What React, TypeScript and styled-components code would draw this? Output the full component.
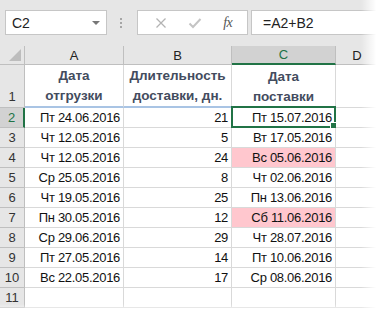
import React from "react";
import styled, { createGlobalStyle } from "styled-components";

const GlobalStyle = createGlobalStyle`
  html, body { margin: 0; padding: 0; background: #fff; }
  * { box-sizing: border-box; }
`;

const FONT = `"Liberation Sans", Arial, sans-serif`;
const GREEN = "#217346";
const GRID = "#d9d9d9";
const HEAD_BG = "#e6e6e6";
const HEAD_LINE = "#bfbfbf";

const Frame = styled.div`
  position: relative;
  width: 379px;
  height: 316px;
  overflow: hidden;
  background: #fff;
  font-family: ${FONT};
`;

const Toolbar = styled.div`
  height: 46px;
  background: ${HEAD_BG};
  display: flex;
  align-items: flex-start;
  padding: 10px 0 0 5px;
`;

const NameBox = styled.div`
  width: 102px;
  height: 25px;
  background: #fff;
  border: 1px solid #c6c6c6;
  display: flex;
  align-items: center;
  justify-content: space-between;
  padding: 0 6px 0 6px;
  font-size: 14px;
  color: #222;
`;

const DropArrow = styled.span`
  width: 0;
  height: 0;
  border-left: 4px solid transparent;
  border-right: 4px solid transparent;
  border-top: 4px solid #777;
  margin-top: 1px;
`;

const Grip = styled.div`
  width: 30px;
  height: 25px;
  display: flex;
  flex-direction: column;
  align-items: center;
  justify-content: center;
  gap: 2px;
  padding-right: 2px;
`;

const GripDot = styled.span`
  width: 2px;
  height: 2px;
  background: #a6a6a6;
`;

const ButtonBox = styled.div`
  width: 111px;
  height: 25px;
  background: #fff;
  border: 1px solid #c6c6c6;
  display: flex;
  align-items: center;
  justify-content: space-around;
  padding: 0 4px 0 6px;
`;

const FxLabel = styled.span`
  font-family: "Liberation Serif", "Times New Roman", serif;
  font-style: italic;
  font-size: 14px;
  color: #555;
  letter-spacing: -0.5px;
`;

const FormulaInput = styled.div`
  flex: 1;
  height: 25px;
  margin-left: 3px;
  background: #fff;
  border: 1px solid #c6c6c6;
  border-right: none;
  display: flex;
  align-items: center;
  padding-left: 11px;
  font-size: 14px;
  color: #222;
`;

const Sheet = styled.div`
  display: grid;
  grid-template-columns: 25px 99px 108px 104px 1fr;
  grid-template-rows: 19px 43px repeat(11, 20px);
`;

const ColHead = styled.div<{ $active?: boolean }>`
  background: ${(p) => (p.$active ? "#d2d2d2" : HEAD_BG)};
  border-right: 1px solid ${HEAD_LINE};
  border-bottom: ${(p) => (p.$active ? `2px solid ${GREEN}` : `1px solid ${HEAD_LINE}`)};
  display: flex;
  align-items: center;
  justify-content: center;
  font-size: 13px;
  color: ${(p) => (p.$active ? GREEN : "#222")};
`;

const Corner = styled.div`
  background: ${HEAD_BG};
  border-right: 1px solid ${HEAD_LINE};
  border-bottom: 1px solid ${HEAD_LINE};
  position: relative;
  &::after {
    content: "";
    position: absolute;
    right: 3px;
    bottom: 3px;
    width: 0;
    height: 0;
    border-left: 12px solid transparent;
    border-bottom: 12px solid #bdbdbd;
  }
`;

const RowHead = styled.div<{ $active?: boolean; $tall?: boolean }>`
  background: ${(p) => (p.$active ? "#d2d2d2" : HEAD_BG)};
  border-right: ${(p) => (p.$active ? `2px solid ${GREEN}` : `1px solid ${HEAD_LINE}`)};
  border-bottom: 1px solid ${HEAD_LINE};
  display: flex;
  align-items: ${(p) => (p.$tall ? "flex-end" : "center")};
  justify-content: center;
  padding-bottom: ${(p) => (p.$tall ? "3px" : "0")};
  font-size: 13px;
  color: ${(p) => (p.$active ? GREEN : "#333")};
`;

const Cell = styled.div<{ $fill?: string; $align?: string; $underline?: boolean }>`
  position: relative;
  background: ${(p) => p.$fill || "#fff"};
  border-right: 1px solid ${GRID};
  border-bottom: ${(p) => (p.$underline ? "2px solid #a9c4e4" : `1px solid ${GRID}`)};
  display: flex;
  align-items: center;
  justify-content: ${(p) => p.$align || "flex-end"};
  padding: 0 3px;
  font-size: 13px;
  letter-spacing: -0.3px;
  color: #111;
  white-space: nowrap;
`;

const HeadCell = styled(Cell)`
  flex-direction: column;
  justify-content: center;
  align-items: center;
  gap: 2px;
  font-weight: bold;
  font-size: 13.5px;
  letter-spacing: 0;
  color: #434c5e;
  line-height: 18px;
  padding-top: 1px;
`;

const Selection = styled.div`
  position: absolute;
  left: -1px;
  top: -2px;
  right: -1px;
  bottom: -1px;
  border: 2px solid ${GREEN};
  pointer-events: none;
  &::after {
    content: "";
    position: absolute;
    right: -4px;
    bottom: -4px;
    width: 6px;
    height: 6px;
    background: ${GREEN};
    border: 1px solid #fff;
  }
`;

const EdgeFade = styled.div<{ $side: "right" | "bottom" }>`
  position: absolute;
  pointer-events: none;
  ${(p) =>
    p.$side === "right"
      ? `top: 0; right: 0; bottom: 0; width: 18px;
         background: linear-gradient(to right, rgba(255,255,255,0), #fff 85%);`
      : `left: 0; right: 0; bottom: 0; height: 12px;
         background: linear-gradient(to bottom, rgba(255,255,255,0), #fff 80%);`}
`;

const rows = [
  ["Пт 24.06.2016", 21, "Пт 15.07.2016"],
  ["Чт 12.05.2016", 5, "Вт 17.05.2016"],
  ["Чт 12.05.2016", 24, "Вс 05.06.2016"],
  ["Ср 25.05.2016", 8, "Чт 02.06.2016"],
  ["Чт 19.05.2016", 25, "Пн 13.06.2016"],
  ["Пн 30.05.2016", 12, "Сб 11.06.2016"],
  ["Ср 29.06.2016", 29, "Чт 28.07.2016"],
  ["Пт 27.05.2016", 14, "Пт 10.06.2016"],
  ["Вс 22.05.2016", 17, "Ср 08.06.2016"],
] as const;

const weekend = (d: string) => d.startsWith("Сб") || d.startsWith("Вс");

const CrossIcon = () => (
  <svg width="12" height="12" viewBox="0 0 12 12">
    <path d="M1.5 1.5 L10.5 10.5 M10.5 1.5 L1.5 10.5" stroke="#b3b3b3" strokeWidth="1.3" fill="none" />
  </svg>
);

const CheckIcon = () => (
  <svg width="14" height="12" viewBox="0 0 14 12">
    <path d="M1.5 6.5 L5 10 L12.5 2" stroke="#c4c4c4" strokeWidth="2" fill="none" />
  </svg>
);

export default function App() {
  return (
    <>
      <GlobalStyle />
      <Frame>
        <Toolbar>
          <NameBox>
            C2
            <DropArrow />
          </NameBox>
          <Grip>
            <GripDot />
            <GripDot />
            <GripDot />
          </Grip>
          <ButtonBox>
            <CrossIcon />
            <CheckIcon />
            <FxLabel>fx</FxLabel>
          </ButtonBox>
          <FormulaInput>=A2+B2</FormulaInput>
        </Toolbar>

        <Sheet>
          <Corner />
          <ColHead>A</ColHead>
          <ColHead>B</ColHead>
          <ColHead $active>C</ColHead>
          <ColHead>D</ColHead>

          <RowHead $tall>1</RowHead>
          <HeadCell $underline>
            <span>Дата</span>
            <span>отгрузки</span>
          </HeadCell>
          <HeadCell $underline>
            <span>Длительность</span>
            <span>доставки, дн.</span>
          </HeadCell>
          <HeadCell>
            <span>Дата</span>
            <span>поставки</span>
          </HeadCell>
          <Cell />

          {rows.map(([ship, days, arrive], i) => (
            <React.Fragment key={i}>
              <RowHead $active={i === 0}>{i + 2}</RowHead>
              <Cell>{ship}</Cell>
              <Cell>{days}</Cell>
              <Cell $fill={weekend(arrive) ? "#ffc7ce" : undefined}>
                {arrive}
                {i === 0 && <Selection />}
              </Cell>
              <Cell />
            </React.Fragment>
          ))}

          <RowHead>11</RowHead>
          <Cell />
          <Cell />
          <Cell />
          <Cell />
        </Sheet>

        <EdgeFade $side="right" />
        <EdgeFade $side="bottom" />
      </Frame>
    </>
  );
}
